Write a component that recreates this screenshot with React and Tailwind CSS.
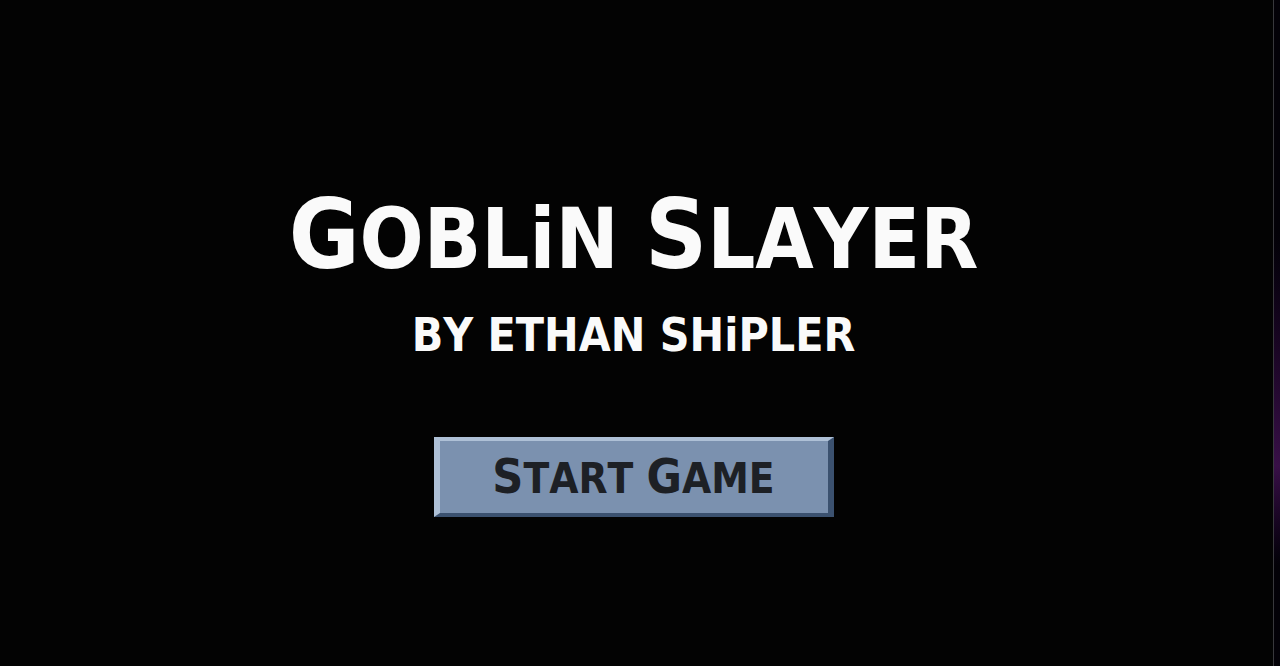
import { Fragment } from 'react'

// Small caps with a taller first letter; the "i" keeps its dot
function PixelWords({ text, wordClass = '' }) {
    return text.split(' ').map((word, index) => (
        <Fragment key={word}>
            {index > 0 && ' '}
            <span className={`inline-block ${wordClass}`}>
                {word.split(/(i)/).map((part, i) =>
                    part === 'i' ? <span key={i} className="normal-case">i</span> : part
                )}
            </span>
        </Fragment>
    ))
}

export default function App() {
    const handleStart = () => {
        window.location.hash = 'play'
    }

    return (
        <div className="flex min-h-screen bg-black font-['DejaVu_Sans_Condensed','DejaVu_Sans',sans-serif] font-bold uppercase [font-kerning:none]">
            <main className="flex flex-1 flex-col items-center justify-center border-r border-[#38383c] bg-[#030303] pt-[38px] pr-1.5 text-[#fafafa]">
                <h1 className="text-[84px] leading-[96px] whitespace-nowrap">
                    <PixelWords text="Goblin Slayer" wordClass="first-letter:text-[96px]" />
                </h1>

                <p className="mt-6 text-[46px] leading-[48px] whitespace-nowrap">
                    <PixelWords text="by Ethan Shipler" />
                </p>

                <button
                    type="button"
                    onClick={handleStart}
                    className="mt-[78px] h-20 w-100 cursor-pointer border-x-6 border-y-4 border-t-[#aec0d6] border-r-[#3b516f] border-b-[#3b516f] border-l-[#aec0d6] bg-[#7b91af] text-[42px] leading-[48px] whitespace-nowrap text-[#1d2025] uppercase"
                >
                    <PixelWords text="Start Game" wordClass="first-letter:text-[48px]" />
                </button>
            </main>

            {/* Edge of the level behind the menu */}
            <div className="w-1.5 bg-linear-to-b from-[#030107] from-35% via-[#381047] via-70% to-[#030107] to-85%" />
        </div>
    )
}
